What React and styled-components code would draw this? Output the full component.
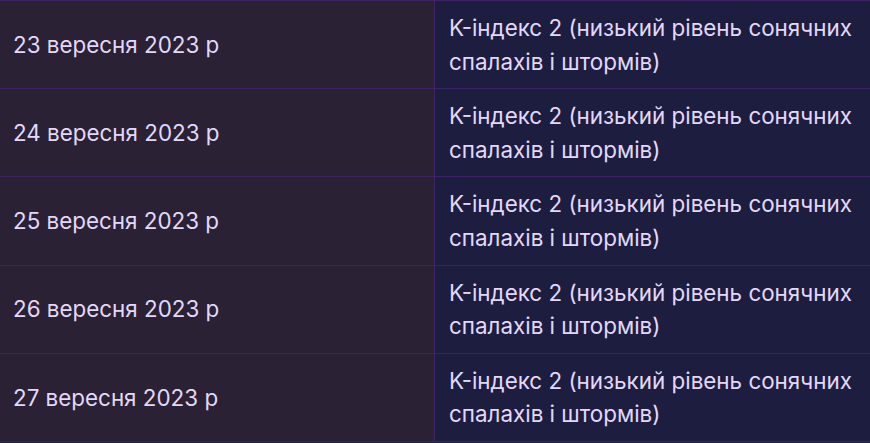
import styled, { createGlobalStyle } from "styled-components"

const GlobalStyle = createGlobalStyle`
  html, body {
    margin: 0;
    padding: 0;
    background: #1d1e3f;
  }
`

const rows = [
  "23 вересня 2023 р",
  "24 вересня 2023 р",
  "25 вересня 2023 р",
  "26 вересня 2023 р",
  "27 вересня 2023 р",
]

function App() {
  return (
    <>
      <GlobalStyle />
      <Table>
        {rows.map((date) => (
          <Row key={date}>
            <DateCell>{date}</DateCell>
            <InfoCell>K-індекс 2 (низький рівень сонячних спалахів і штормів)</InfoCell>
          </Row>
        ))}
      </Table>
    </>
  )
}

export default App

const Table = styled.div`
  width: 870px;
  display: flex;
  flex-direction: column;
  border-bottom: 1px solid #3d2366;
  font-family: Inter, "Noto Sans", sans-serif;
  font-size: 22.4px;
  line-height: 33.6px;
  color: #e3d8fa;
`
const Row = styled.div`
  display: grid;
  grid-template-columns: 435px 1fr;
  border-top: 1px solid #3d2366;
  height: 87.2px;
`
const DateCell = styled.div`
  background: #2a2135;
  padding: 0 13px;
  display: flex;
  align-items: center;
  border-right: 1px solid #3d2366;
`
const InfoCell = styled.div`
  background: #1d1e3f;
  padding: 0 14px;
  display: flex;
  align-items: center;
`
